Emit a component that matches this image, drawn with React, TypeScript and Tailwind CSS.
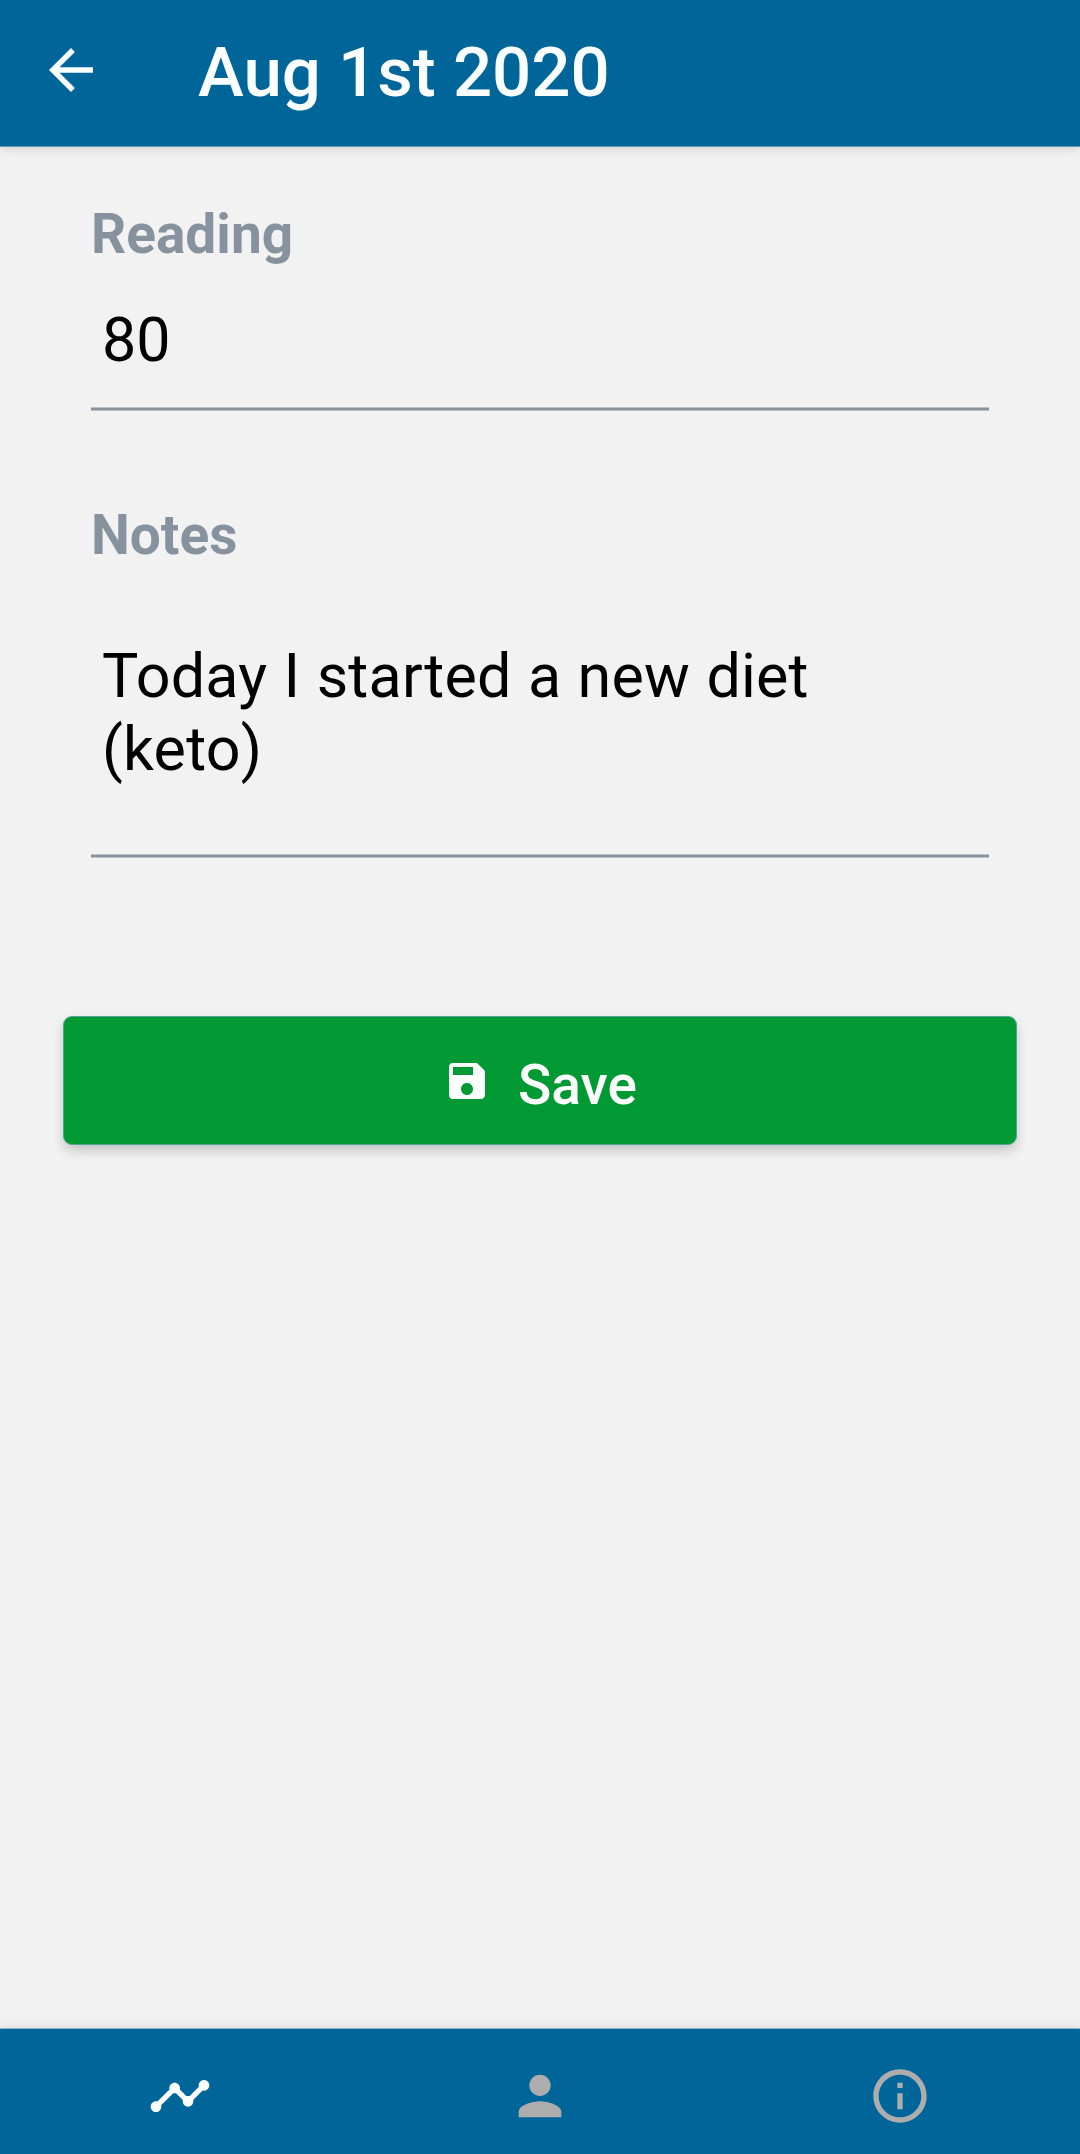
import type { ReactNode } from "react";
import {
  MdArrowBack,
  MdInfoOutline,
  MdPerson,
  MdSave,
  MdTimeline,
} from "react-icons/md";

function Header({ title }: { title: string }) {
  return (
    <header className="z-10 flex h-[147px] shrink-0 items-center border-b border-[#5e97b8] bg-[#006699] pl-[38px] text-[#fafeff] shadow-[0_1px_10px_rgba(0,0,0,0.16)]">
      <button aria-label="Back" className="mt-[-7px]">
        <MdArrowBack className="size-[66px]" />
      </button>
      <h1 className="ml-[94px] text-[69px] leading-[82px] font-medium whitespace-nowrap">
        {title}
      </h1>
    </header>
  );
}

function Underline() {
  return <div className="h-1 border-y border-[#b9c2c9] bg-[#86939e]" />;
}

function Field({ label, children }: { label: string; children: ReactNode }) {
  return (
    <section>
      <h2 className="text-[55px] leading-[64px] font-bold text-[#86939e]">{label}</h2>
      {children}
      <Underline />
    </section>
  );
}

function Tab({ label, active, children }: { label: string; active?: boolean; children: ReactNode }) {
  return (
    <button
      aria-label={label}
      className={
        active
          ? "flex items-center justify-center text-[#fafeff]"
          : "flex items-center justify-center text-[#adadad]"
      }
    >
      {children}
    </button>
  );
}

export default function App() {
  return (
    <div className="flex h-[2154px] w-[1080px] flex-col overflow-hidden bg-[#f2f2f2] font-['Roboto',sans-serif]">
      <Header title="Aug 1st 2020" />
      <main className="flex-1 px-[63px] pt-[55px]">
        <div className="px-7">
          <Field label="Reading">
            <p className="h-[141px] pt-[38px] pl-[11px] text-[61px] leading-[73px] text-black">80</p>
          </Field>
          <div className="h-[92px]" />
          <Field label="Notes">
            <p className="h-[287px] pt-[73px] pl-[11px] text-[61px] leading-[73px] tracking-[0.2px] text-black [word-spacing:1px]">
              Today I started a new diet
              <br />
              (keto)
            </p>
          </Field>
        </div>
        <button className="mt-[158px] flex h-[129px] w-full items-center justify-center rounded-[9px] border border-[#4fa59a] bg-[#009933] text-[#fafffb] shadow-[0_6px_12px_rgba(0,0,0,0.18)]">
          <MdSave className="mt-[1px] mr-[27px] size-[48px]" />
          <span className="mt-[9px] text-[55px] leading-[64px] font-medium">Save</span>
        </button>
      </main>
      <nav className="grid h-[126px] shrink-0 grid-cols-3 border-t border-[#8db4ca] bg-[#006699] pt-[8px] shadow-[0_0_10px_rgba(0,0,0,0.12)]">
        <Tab label="Readings" active>
          <MdTimeline className="size-[64px]" />
        </Tab>
        <Tab label="Profile">
          <MdPerson className="size-[64px]" />
        </Tab>
        <Tab label="About">
          <MdInfoOutline className="size-[64px]" />
        </Tab>
      </nav>
    </div>
  );
}
